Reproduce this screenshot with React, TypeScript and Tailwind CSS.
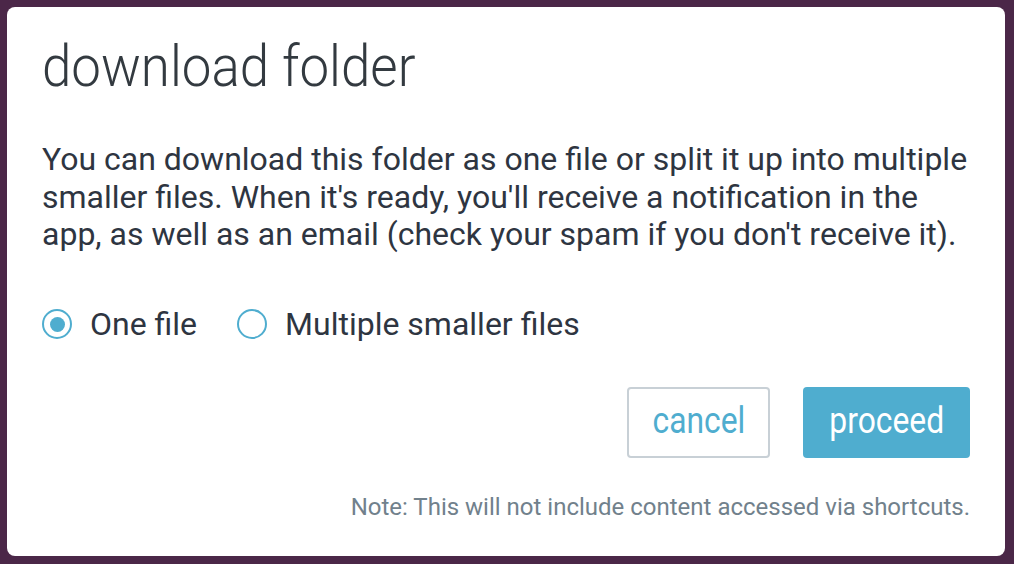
export default function App() {
  return (
    <div className="w-[1014px] h-[564px] bg-[#4b2748] p-[7px] pr-[9px] pb-[8px]">
      <div className="w-full h-full bg-white rounded-[8px] px-[35px] pt-[31px] flex flex-col" style={{ fontFamily: 'Roboto, sans-serif' }}>
        <h1 className="text-[57px] leading-[57px] font-light text-[#333a40]">
          <span className="inline-block scale-x-[0.927] origin-left whitespace-nowrap">download folder</span>
        </h1>
        <p className="mt-[46px] text-[32px] leading-[37.5px] text-[#2e3541]">
          You can download this folder as one file or split it up into multiple smaller files. When it's ready, you'll receive a notification in the app, as well as an email (check your spam if you don't receive it).
        </p>
        <div className="mt-[52px] flex items-center text-[32px] leading-[37.5px] text-[#2e3541]">
          <label className="flex items-center gap-[18px]">
            <span className="w-[30px] h-[30px] rounded-full border-2 border-[#4fadcf] flex items-center justify-center">
              <span className="w-[15px] h-[15px] rounded-full bg-[#4fadcf]" />
            </span>
            <span>One file</span>
          </label>
          <label className="flex items-center gap-[18px] ml-[40px]">
            <span className="w-[30px] h-[30px] rounded-full border-2 border-[#4fadcf]" />
            <span>Multiple smaller files</span>
          </label>
        </div>
        <div className="mt-[44px] flex justify-end gap-[33px] text-[37px]">
          <button className="w-[143px] h-[71px] pb-[3px] border-2 border-[#c8d0d6] rounded-[4px] text-[#4fadcf] bg-white flex items-center justify-center">
            <span className="inline-block scale-x-[0.86]">cancel</span>
          </button>
          <button className="w-[167px] h-[71px] pb-[3px] rounded-[4px] text-white bg-[#4fadcf] flex items-center justify-center">
            <span className="inline-block scale-x-[0.86]">proceed</span>
          </button>
        </div>
        <p className="mt-[35px] text-right text-[24px] leading-[28px] text-[#71818c]">
          Note: This will not include content accessed via shortcuts.
        </p>
      </div>
    </div>
  );
}
